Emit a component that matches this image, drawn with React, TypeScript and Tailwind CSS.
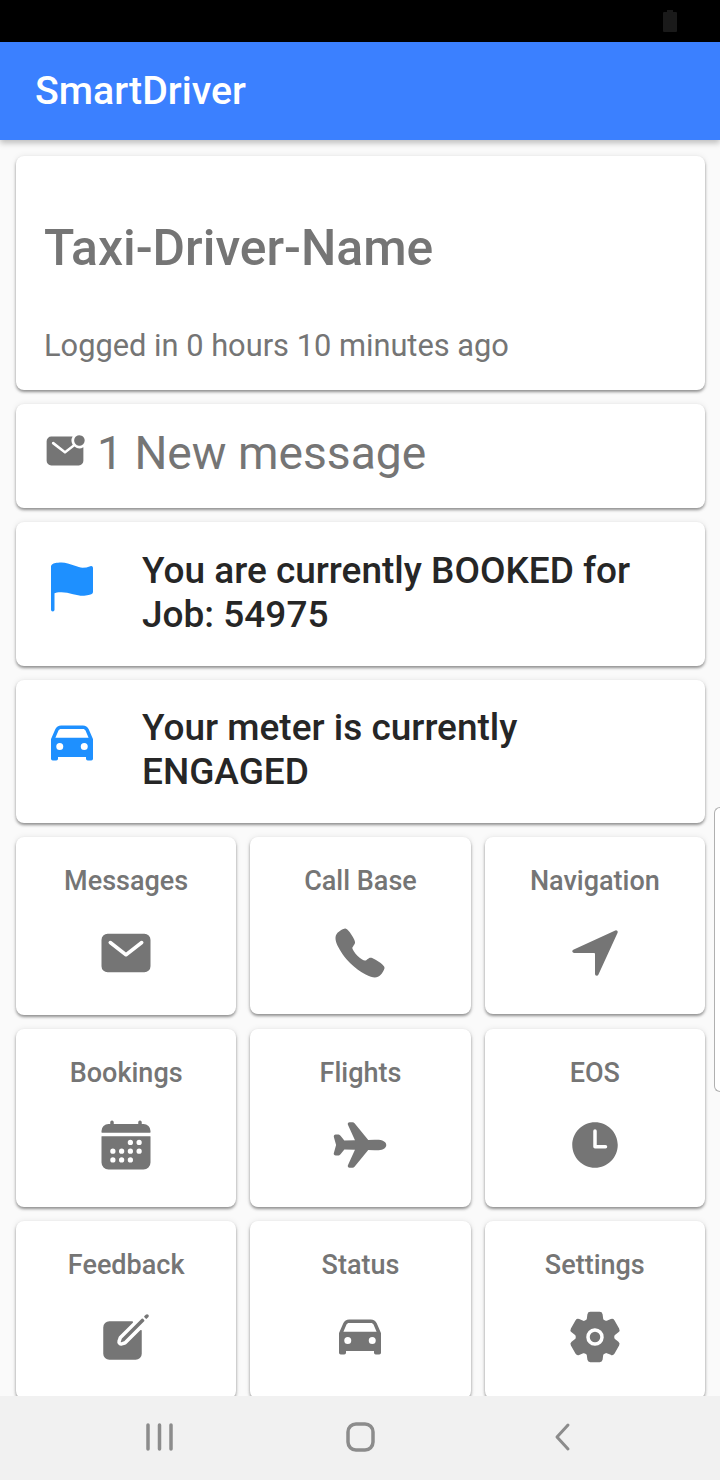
import { IoMail, IoCall, IoNavigate, IoCalendar, IoAirplane, IoTime, IoCreate, IoCar, IoSettings, IoMailUnread, IoFlag } from 'react-icons/io5';

const tiles = [
  { label: 'Messages', Icon: IoMail, size: 'h-[178px]' },
  { label: 'Call Base', Icon: IoCall, size: 'h-[177px]' },
  { label: 'Navigation', Icon: IoNavigate, size: 'h-[177px]' },
  { label: 'Bookings', Icon: IoCalendar, size: 'h-[178px]' },
  { label: 'Flights', Icon: IoAirplane, size: 'h-[178px]' },
  { label: 'EOS', Icon: IoTime, size: 'h-[178px]' },
  { label: 'Feedback', Icon: IoCreate, size: 'h-[178px]' },
  { label: 'Status', Icon: IoCar, size: 'h-[178px]' },
  { label: 'Settings', Icon: IoSettings, size: 'h-[178px]' },
];

const card = 'rounded-[8px] bg-white shadow-[0_2px_3px_rgba(0,0,0,0.4),0_0_6px_rgba(0,0,0,0.08)]';

export default function App() {
  return (
    <div className="relative flex h-[1480px] w-[720px] flex-col overflow-hidden bg-[#fafafa] font-['Roboto',sans-serif]">
      {/* status bar */}
      <div className="flex h-[42px] shrink-0 items-center justify-end bg-black pr-[43px]">
        <div className="flex flex-col items-center">
          <div className="h-[2px] w-[6px] bg-[#1a1a1a]" />
          <div className="h-[20px] w-[14px] rounded-[1px] bg-[#1a1a1a]" />
        </div>
      </div>

      {/* app bar */}
      <div className="z-10 flex h-[98px] shrink-0 items-center bg-[#3b80ff] pl-[35px] shadow-[0_3px_6px_rgba(0,0,0,0.25)]">
        <span className="pt-[2px] text-[39.3px] font-medium leading-none text-white">SmartDriver</span>
      </div>

      <main className="flex min-h-0 flex-1 flex-col gap-[14px] overflow-hidden pl-[16px] pr-[15px] pt-[16px]">
        <div className={`${card} h-[234px] shrink-0 px-[28px]`}>
          <div className="pt-[64px] text-[49.8px] font-medium leading-[56px] text-[#757575]">Taxi-Driver-Name</div>
          <div className="pt-[50px] text-[30.8px] leading-[40px] text-[#757575]">Logged in 0 hours 10 minutes ago</div>
        </div>

        <div className={`${card} flex h-[104px] shrink-0 items-center pl-[28px]`}>
          <IoMailUnread className="mb-[10px] h-[42px] w-[42px] text-[#757575]" />
          <span className="mb-[6px] pl-[11px] text-[46.2px] leading-none text-[#757575]">1 New message</span>
        </div>

        <div className={`${card} flex h-[144px] shrink-0 items-center pl-[28px] pr-[56px]`}>
          <IoFlag className="mb-[14px] h-[56px] w-[56px] shrink-0 text-[#1e90ff]" />
          <span className="mb-[2px] pl-[42px] text-[37px] font-medium leading-[44px] text-[#262626]">You are currently BOOKED for Job: 54975</span>
        </div>

        <div className={`${card} flex h-[143px] shrink-0 items-center pl-[28px] pr-[56px]`}>
          <IoCar className="mb-[18px] h-[56px] w-[56px] shrink-0 text-[#1e90ff]" />
          <span className="mb-[4px] pl-[42px] text-[37px] font-medium leading-[44px] text-[#262626]">Your meter is currently ENGAGED</span>
        </div>

        <div className="grid shrink-0 grid-cols-3 gap-[14px]">
          {tiles.map(({ label, Icon, size }) => (
            <div key={label} className={`${card} ${size} flex flex-col items-center pt-[25px]`}>
              <span className="text-[27px] font-medium leading-[38px] text-[#757575]">{label}</span>
              <Icon className="mt-[25px] h-[56px] w-[56px] text-[#757575]" />
            </div>
          ))}
        </div>
      </main>

      {/* edge panel handle */}
      <div className="absolute right-0 top-[807px] h-[285px] w-[6px] rounded-l-[6px] border-y border-l border-[#b0b0b0] bg-white" />

      {/* android nav bar */}
      <div className="z-10 flex h-[84px] shrink-0 items-center bg-[#f1f1f1]">
        <svg className="absolute left-[144px] top-[1422px]" width="32" height="30" viewBox="0 0 32 30" fill="none" stroke="#8c8c8c" strokeWidth="3.5" strokeLinecap="round">
          <path d="M4 3v24M15.5 3v24M27 3v24" />
        </svg>
        <svg className="absolute left-[345px] top-[1422px]" width="31" height="30" viewBox="0 0 31 30" fill="none" stroke="#8c8c8c" strokeWidth="3.5">
          <rect x="3" y="2" width="25" height="26" rx="8" />
        </svg>
        <svg className="absolute left-[552px] top-[1422px]" width="20" height="30" viewBox="0 0 20 30" fill="none" stroke="#8c8c8c" strokeWidth="3" strokeLinecap="round" strokeLinejoin="round">
          <path d="M16 3 5 15l11 12" />
        </svg>
      </div>
    </div>
  );
}
